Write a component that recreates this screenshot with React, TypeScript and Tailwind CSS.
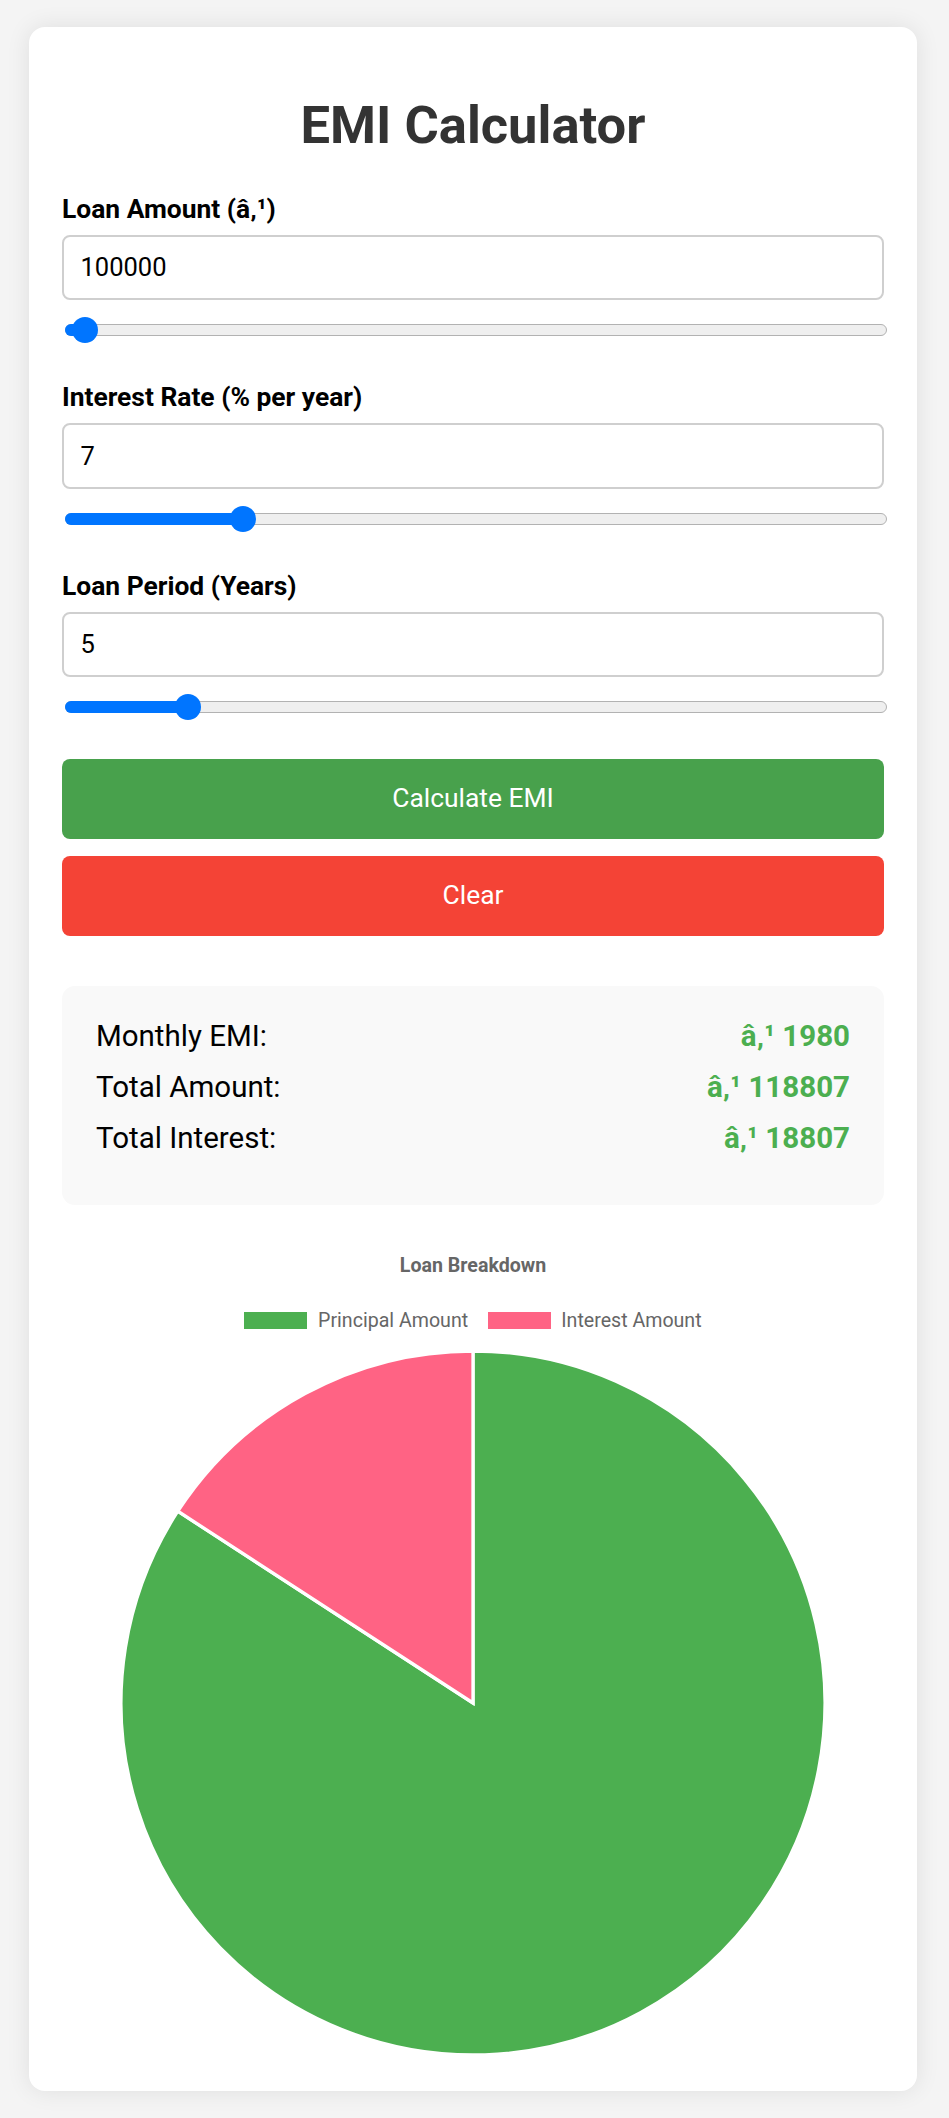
import { useState } from "react";

interface EmiResult {
  emi: number;
  total: number;
  interest: number;
}

const CURRENCY = "â‚¹";

function calculateEmi(principal: number, rate: number, years: number): EmiResult {
  const r = rate / 12 / 100;
  const n = years * 12;
  if (!principal || !n) return { emi: 0, total: 0, interest: 0 };
  const emi = r === 0 ? principal / n : (principal * r * Math.pow(1 + r, n)) / (Math.pow(1 + r, n) - 1);
  const total = emi * n;
  return { emi: Math.round(emi), total: Math.round(total), interest: Math.round(total - principal) };
}

function RangeSlider({
  value,
  min,
  max,
  step,
  onChange,
}: {
  value: number;
  min: number;
  max: number;
  step: number;
  onChange: (v: number) => void;
}) {
  const pct = Math.min(1, Math.max(0, (value - min) / (max - min)));
  return (
    <div className="relative mt-[17px] ml-[3px] h-[26px] w-full">
      <div className="absolute left-0 right-0 top-[7px] h-[12px] rounded-full border border-[#b2b2b2] bg-[#efefef]" />
      <div
        className="absolute left-0 top-[7px] h-[12px] rounded-full bg-[#0075ff]"
        style={{ width: `calc(${pct} * (100% - 26px) + 13px)` }}
      />
      <div
        className="absolute top-0 h-[26px] w-[26px] rounded-full bg-[#0075ff]"
        style={{ left: `calc(${pct} * (100% - 26px))` }}
      />
      <input
        type="range"
        min={min}
        max={max}
        step={step}
        value={value}
        onChange={(e) => onChange(Number(e.target.value))}
        className="absolute inset-0 h-full w-full cursor-pointer opacity-0"
      />
    </div>
  );
}

function Field({
  label,
  value,
  min,
  max,
  step,
  onChange,
}: {
  label: string;
  value: number;
  min: number;
  max: number;
  step: number;
  onChange: (v: number) => void;
}) {
  return (
    <div className="mb-[39px]">
      <label className="mb-[10px] block text-[26.4px] font-bold leading-[31px] text-black">{label}</label>
      <input
        type="number"
        value={value}
        onChange={(e) => onChange(Number(e.target.value))}
        className="h-[65.5px] w-full rounded-[8px] border-2 border-[#cfcfcf] bg-white px-[16.5px] text-[25.5px] text-black outline-none"
      />
      <RangeSlider value={value} min={min} max={max} step={step} onChange={onChange} />
    </div>
  );
}

function PieChart({ principal, interest }: { principal: number; interest: number }) {
  const r = 352;
  const total = principal + interest || 1;
  const end = -Math.PI / 2 + (principal / total) * Math.PI * 2;
  const ex = r * Math.cos(end);
  const ey = r * Math.sin(end);
  const largeGreen = principal / total > 0.5 ? 1 : 0;
  const largePink = interest / total > 0.5 ? 1 : 0;

  return (
    <svg viewBox="-354 -354 708 708" className="mx-auto mt-[17px] block h-[708px] w-[708px]">
      <path
        d={`M0 0 L0 ${-r} A${r} ${r} 0 ${largeGreen} 1 ${ex} ${ey} Z`}
        fill="#4caf50"
        stroke="#fff"
        strokeWidth={3.3}
      />
      <path
        d={`M0 0 L${ex} ${ey} A${r} ${r} 0 ${largePink} 1 0 ${-r} Z`}
        fill="#ff6384"
        stroke="#fff"
        strokeWidth={3.3}
      />
    </svg>
  );
}

export default function App() {
  const [amount, setAmount] = useState(100000);
  const [rate, setRate] = useState(7);
  const [years, setYears] = useState(5);
  const [result, setResult] = useState<EmiResult>(calculateEmi(100000, 7, 5));

  const handleCalculate = () => {
    setResult(calculateEmi(amount, rate, years));
  };

  const handleClear = () => {
    setAmount(100000);
    setRate(7);
    setYears(5);
    setResult({ emi: 0, total: 0, interest: 0 });
  };

  return (
    <div className="min-h-[2118px] bg-[#f4f4f4] pt-[27px] font-['Roboto',sans-serif]">
      <div className="ml-[29px] w-[888px] rounded-[16px] bg-white px-[33px] pt-[33px] pb-[34px] shadow-[0_0_25px_rgba(0,0,0,0.09)]">
        <h1 className="mt-[35px] mb-[37.5px] text-center text-[52.5px] font-bold leading-[61px] text-[#333]">
          EMI Calculator
        </h1>

        <Field label={`Loan Amount (${CURRENCY})`} value={amount} min={10000} max={10000000} step={1000} onChange={setAmount} />
        <Field label="Interest Rate (% per year)" value={rate} min={1} max={30} step={0.1} onChange={setRate} />
        <Field label="Loan Period (Years)" value={years} min={1} max={30} step={1} onChange={setYears} />

        <button
          onClick={handleCalculate}
          className="mt-[2px] block h-[80px] w-full rounded-[8px] bg-[#48a14c] text-[26.4px] text-white"
        >
          Calculate EMI
        </button>
        <button
          onClick={handleClear}
          className="mt-[17px] block h-[80px] w-full rounded-[8px] bg-[#f44336] text-[26.4px] text-white"
        >
          Clear
        </button>

        <div className="mt-[49.5px] rounded-[13px] bg-[#f9f9f9] px-[34px] pt-[33px] pb-[49.5px]">
          <div className="flex flex-col gap-[16.5px] text-[29.5px] leading-[34.6px] text-black">
            <div className="flex justify-between">
              <span>Monthly EMI:</span>
              <span className="font-bold text-[#4caf50]">{CURRENCY} {result.emi}</span>
            </div>
            <div className="flex justify-between">
              <span>Total Amount:</span>
              <span className="font-bold text-[#4caf50]">{CURRENCY} {result.total}</span>
            </div>
            <div className="flex justify-between">
              <span>Total Interest:</span>
              <span className="font-bold text-[#4caf50]">{CURRENCY} {result.interest}</span>
            </div>
          </div>
        </div>

        <div className="mt-[49px]">
          <div className="text-center text-[19.6px] font-bold leading-[23px] text-[#666]">Loan Breakdown</div>
          <div className="mt-[32px] flex h-[23px] items-center justify-center gap-[19.4px] text-[19.6px] text-[#666]">
            <div className="flex items-center">
              <span className="h-[16.5px] w-[63px] bg-[#4caf50]" />
              <span className="ml-[10.7px]">Principal Amount</span>
            </div>
            <div className="flex items-center">
              <span className="h-[16.5px] w-[63px] bg-[#ff6384]" />
              <span className="ml-[10.7px]">Interest Amount</span>
            </div>
          </div>
          <PieChart principal={amount} interest={result.interest} />
        </div>
      </div>
    </div>
  );
}
